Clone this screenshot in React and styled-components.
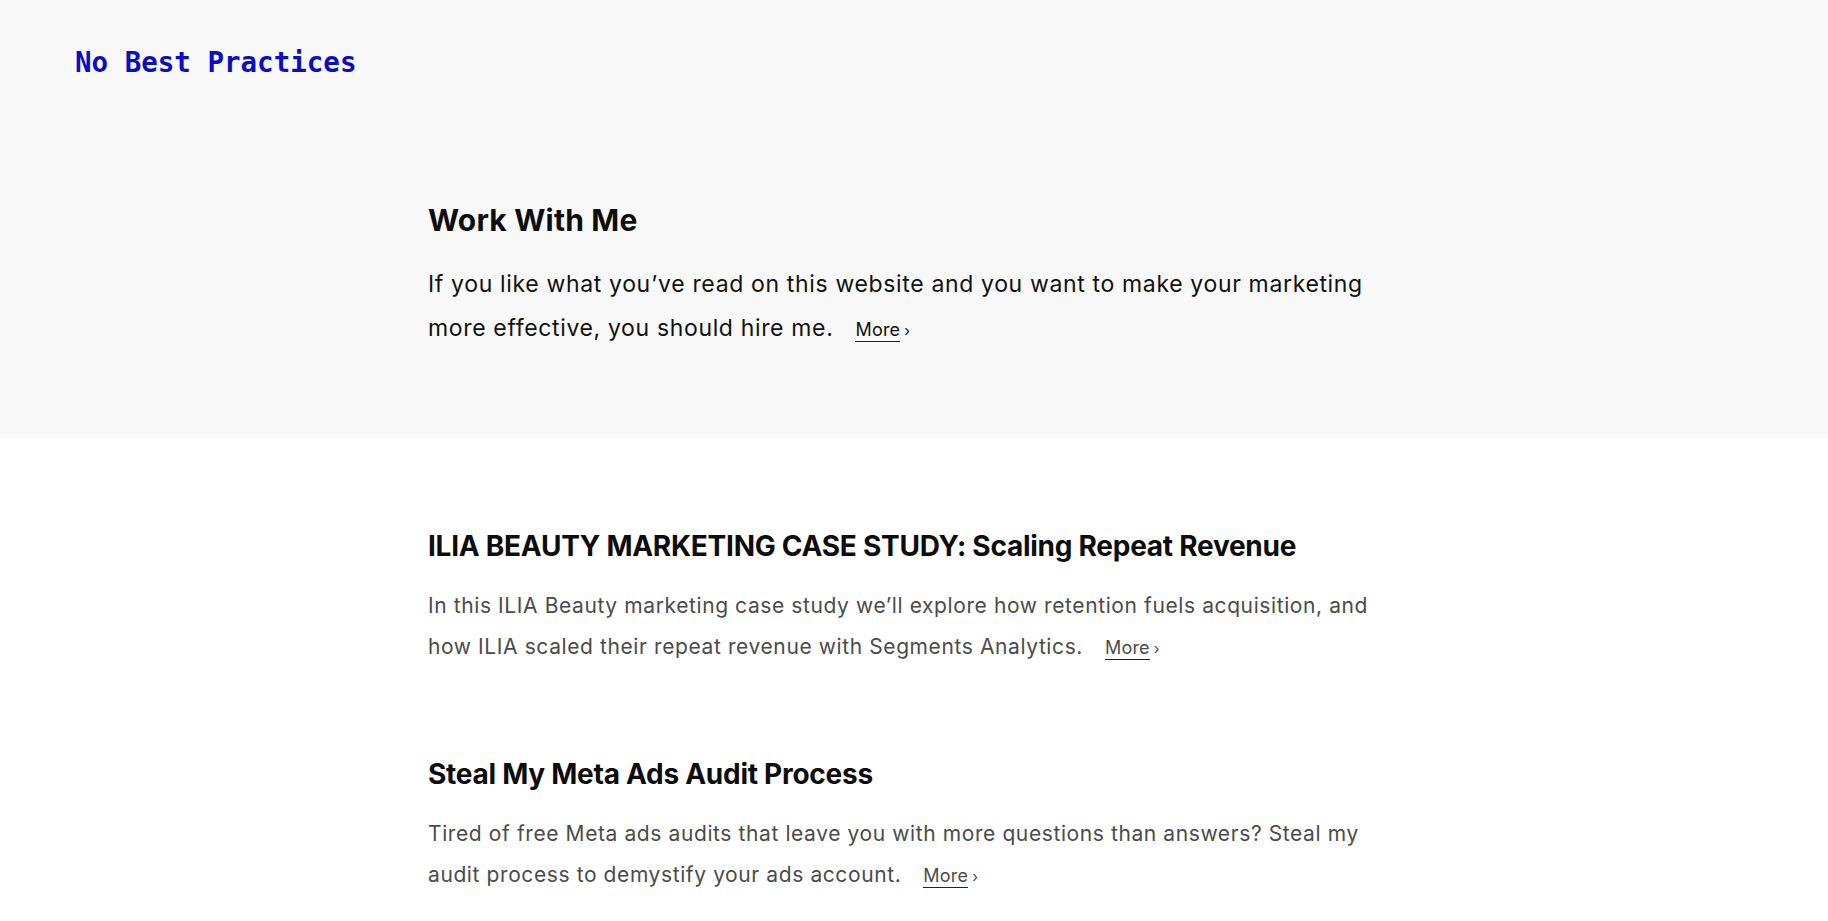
import React from "react";
import styled, { createGlobalStyle } from "styled-components";

const GlobalStyle = createGlobalStyle`
	html, body {
		margin: 0;
		padding: 0;
		background: #ffffff;
		font-family: Inter, "Liberation Sans", Arial, sans-serif;
		color: #111111;
	}
	* {
		box-sizing: border-box;
	}
`;

const posts = [
	{
		title: "ILIA BEAUTY MARKETING CASE STUDY: Scaling Repeat Revenue",
		summary:
			"In this ILIA Beauty marketing case study we’ll explore how retention fuels acquisition, and how ILIA scaled their repeat revenue with Segments Analytics."
	},
	{
		title: "Steal My Meta Ads Audit Process",
		summary:
			"Tired of free Meta ads audits that leave you with more questions than answers? Steal my audit process to demystify your ads account."
	}
];

const App = () => {
	return (
		<>
			<GlobalStyle />
			<Top>
				<Header>
					<Logo href="#">No Best Practices</Logo>
				</Header>
				<Container>
					<IntroTitle>Work With Me</IntroTitle>
					<IntroText>
						If you like what you’ve read on this website and you want to make
						your marketing more effective, you should hire me.
						<MoreLink href="#">More</MoreLink>
					</IntroText>
				</Container>
			</Top>
			<Posts>
				{posts.map((post) => (
					<Post key={post.title}>
						<PostTitle>{post.title}</PostTitle>
						<PostSummary>
							{post.summary}
							<MoreLink href="#">More</MoreLink>
						</PostSummary>
					</Post>
				))}
			</Posts>
		</>
	);
};

const Top = styled.section`
	background: #f8f8f8;
	padding-bottom: 88px;
`;

const Header = styled.header`
	padding: 48px 75px 0;
	height: 74px;
`;

const Logo = styled.a`
	display: inline-block;
	font-family: "DejaVu Sans Mono", "Liberation Mono", monospace;
	font-weight: bold;
	font-size: 27.5px;
	line-height: 28px;
	color: #0c0cc4;
	text-decoration: none;
`;

const Container = styled.div`
	width: 972px;
	margin: 0 auto;
`;

const IntroTitle = styled.h2`
	margin: 128px 0 24px;
	font-size: 30px;
	line-height: 36px;
	font-weight: 700;
	letter-spacing: 0.2px;
	color: #0d0d0d;
`;

const IntroText = styled.p`
	margin: 0;
	font-size: 23px;
	line-height: 44px;
	letter-spacing: 0.65px;
	color: #111111;
`;

const MoreLink = styled.a`
	position: relative;
	display: inline-block;
	margin-left: 22px;
	margin-right: 12px;
	font-size: 18px;
	line-height: 1;
	letter-spacing: 0.2px;
	color: inherit;
	text-decoration: none;
	white-space: nowrap;
	border-bottom: 1.5px solid #1c1c5c;
	padding-bottom: 2px;

	&::after {
		content: "›";
		position: absolute;
		left: 100%;
		bottom: 3px;
		margin-left: 4px;
		font-size: 15px;
	}
`;

const Posts = styled.main`
	width: 972px;
	margin: 0 auto;
	padding: 91px 0 60px;
	display: flex;
	flex-direction: column;
	gap: 90px;
`;

const Post = styled.article`
	display: flex;
	flex-direction: column;
	gap: 22px;
`;

const PostTitle = styled.h3`
	margin: 0;
	font-size: 28px;
	line-height: 34px;
	font-weight: 700;
	letter-spacing: -0.26px;
	color: #0d0d0d;
`;

const PostSummary = styled.p`
	margin: 0;
	font-size: 21px;
	line-height: 41px;
	letter-spacing: 0.6px;
	color: #4b4b4b;
`;

export default App;
